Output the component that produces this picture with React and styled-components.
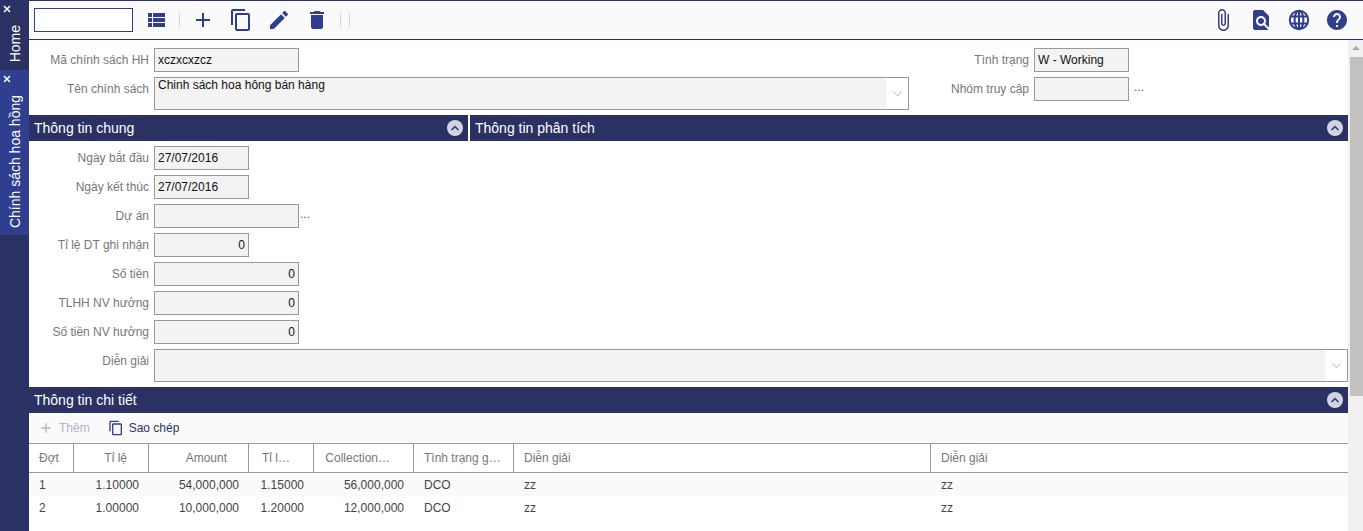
import React from 'react';
import styled, { createGlobalStyle } from 'styled-components';

const NAVY = '#2b3263';
const BLUE = '#2f3e8f';
const LINE = '#999';

const GlobalStyle = createGlobalStyle`
  html, body {
    margin: 0;
    padding: 0;
    height: 100%;
    overflow: hidden;
    background: #fff;
    font-family: "Liberation Sans", Arial, sans-serif;
    font-size: 12px;
  }
`;

const Page = styled.div`
  display: flex;
  height: 531px;
  overflow: hidden;
`;

const Sidebar = styled.nav`
  display: flex;
  flex-direction: column;
  flex: 0 0 29px;
  background: ${NAVY};
`;

const Tab = styled.div`
  display: flex;
  flex-direction: column;
  height: ${(p) => p.$h}px;
  padding-bottom: ${(p) => p.$pb}px;
  box-sizing: border-box;
  background: ${(p) => (p.$active ? BLUE : NAVY)};
  color: #fff;
`;

const TabClose = styled.svg`
  display: block;
  width: 8px;
  height: 8px;
  margin: 5px 0 0 3px;
`;

const TabLabel = styled.div`
  margin-top: auto;
  align-self: center;
  writing-mode: vertical-rl;
  transform: rotate(180deg);
  font-size: 14px;
  line-height: 16px;
  white-space: nowrap;
`;

const Main = styled.div`
  display: flex;
  flex-direction: column;
  flex: 1;
  min-width: 0;
`;

const Toolbar = styled.div`
  display: flex;
  align-items: center;
  flex: 0 0 40px;
  box-sizing: border-box;
  padding: 0 14px 0 5px;
  background: #fafafa;
  border-top: 1px solid ${NAVY};
  border-bottom: 1px solid ${NAVY};
`;

const SearchBox = styled.div`
  width: 99px;
  height: 24px;
  box-sizing: border-box;
  background: #fff;
  border: 1px solid ${BLUE};
`;

const ToolIcon = styled.svg`
  display: block;
  flex: 0 0 24px;
  width: 24px;
  height: 24px;
  margin-left: ${(p) => p.$ml ?? 14}px;
  fill: ${BLUE};
`;

const ToolSep = styled.span`
  flex: 0 0 1px;
  height: 14px;
  margin-left: ${(p) => p.$ml}px;
  background: #d4d4d4;
`;

const ToolRight = styled.div`
  display: flex;
  align-items: center;
  margin-left: auto;
`;

const Body = styled.div`
  display: flex;
  flex: 1;
  min-height: 0;
`;

const Content = styled.div`
  flex: 0 0 1319px;
  width: 1319px;
`;

const ScrollTrack = styled.div`
  flex: 0 0 15px;
  background: #f1f1f1;
`;

const ScrollArrow = styled.div`
  width: 0;
  height: 0;
  margin: 6px 0 0 4px;
  border-left: 4px solid transparent;
  border-right: 4px solid transparent;
  border-bottom: 4px solid #a8a8a8;
`;

const ScrollThumb = styled.div`
  height: 339px;
  margin: 7px 0 0 2px;
  background: #c1c1c1;
`;

const TopForm = styled.div`
  display: grid;
  grid-template-columns: 880px 1fr;
  row-gap: 5px;
  padding: 8px 0 5px;
`;

const Field = styled.div`
  display: flex;
  align-items: flex-start;
`;

const Label = styled.label`
  flex: 0 0 120px;
  margin-right: 5px;
  line-height: 24px;
  text-align: right;
  color: #777;
  white-space: nowrap;
`;

const Input = styled.div`
  width: ${(p) => p.$w}px;
  height: 24px;
  box-sizing: border-box;
  padding: 0 3px;
  line-height: 22px;
  text-align: ${(p) => (p.$right ? 'right' : 'left')};
  background: #f3f3f3;
  border: 1px solid ${LINE};
  color: #111;
`;

const TextArea = styled.div`
  display: flex;
  flex: ${(p) => (p.$w ? `0 0 ${p.$w}px` : 1)};
  height: 33px;
  box-sizing: border-box;
  border: 1px solid ${LINE};
  color: #111;
  background: #fff;
`;

const TextValue = styled.div`
  flex: 1;
  padding: 0 3px;
  line-height: 15px;
  background: #f3f3f3;
`;

const TextChevron = styled.div`
  display: flex;
  justify-content: center;
  flex: 0 0 22px;
  padding-top: 13px;
`;

const Dots = styled.span`
  margin-left: ${(p) => p.$ml}px;
  line-height: 21px;
  color: #555;
`;

const Sections = styled.div`
  display: grid;
  grid-template-columns: 439px 878px;
  column-gap: 2px;
`;

const SectionBar = styled.div`
  display: flex;
  align-items: center;
  justify-content: space-between;
  height: 26px;
  padding: 0 5px;
  background: ${NAVY};
  color: #fff;
  font-size: 14px;
`;

const Collapse = styled.span`
  display: flex;
  align-items: center;
  justify-content: center;
  width: 16px;
  height: 16px;
  border-radius: 50%;
  background: #d2d4e2;
`;

const FieldStack = styled.div`
  display: flex;
  flex-direction: column;
  gap: 5px;
  padding: 5px 0;
`;

const NoteRow = styled(Field)`
  padding-bottom: 5px;
`;

const SubToolbar = styled.div`
  display: flex;
  align-items: center;
  height: 30px;
  padding-left: 9px;
  background: #fafafa;
`;

const SubAction = styled.span`
  display: flex;
  align-items: center;
  gap: 5px;
  margin-right: ${(p) => p.$mr ?? 0}px;
  color: ${(p) => (p.$disabled ? '#b1b4d0' : NAVY)};
`;

const SubIcon = styled.svg`
  display: block;
  width: 16px;
  height: 16px;
  fill: ${(p) => (p.$disabled ? '#b1b4d0' : BLUE)};
`;

const Grid = styled.table`
  width: 1319px;
  table-layout: fixed;
  border-collapse: separate;
  border-spacing: 0;
  font-size: 12px;
`;

const Th = styled.th`
  width: ${(p) => p.$w}px;
  height: 30px;
  box-sizing: border-box;
  padding: 0 ${(p) => p.$pr}px 0 ${(p) => p.$pl}px;
  border-top: 1px solid ${LINE};
  border-bottom: 1px solid ${LINE};
  border-right: ${(p) => (p.$last ? 'none' : `1px solid ${LINE}`)};
  font-weight: normal;
  color: #777;
  text-align: ${(p) => (p.$right ? 'right' : 'left')};
  white-space: nowrap;
`;

const Tr = styled.tr`
  background: ${(p) => (p.$odd ? '#fafafa' : '#fff')};
`;

const Td = styled.td`
  height: 23px;
  padding: 0 10px;
  color: #444;
  text-align: ${(p) => (p.$right ? 'right' : 'left')};
`;

const ICONS = {
  list: 'M4 14h4v-4H4v4zm0 5h4v-4H4v4zM4 9h4V5H4v4zm5 5h12v-4H9v4zm0 5h12v-4H9v4zM9 5v4h12V5H9z',
  add: 'M19 13h-6v6h-2v-6H5v-2h6V5h2v6h6v2z',
  copy: 'M16 1H4c-1.1 0-2 .9-2 2v14h2V3h12V1zm3 4H8c-1.1 0-2 .9-2 2v14c0 1.1.9 2 2 2h11c1.1 0 2-.9 2-2V7c0-1.1-.9-2-2-2zm0 16H8V7h11v14z',
  edit: 'M3 17.25V21h3.75L17.81 9.94l-3.75-3.75L3 17.25zM20.71 7.04c.39-.39.39-1.02 0-1.41l-2.34-2.34c-.39-.39-1.02-.39-1.41 0l-1.83 1.83 3.75 3.75 1.83-1.83z',
  trash: 'M6 19c0 1.1.9 2 2 2h8c1.1 0 2-.9 2-2V7H6v12zM19 4h-3.5l-1-1h-5l-1 1H5v2h14V4z',
  clip: 'M16.5 6v11.5c0 2.21-1.79 4-4 4s-4-1.79-4-4V5c0-1.38 1.12-2.5 2.5-2.5s2.5 1.12 2.5 2.5v10.5c0 .55-.45 1-1 1s-1-.45-1-1V6H10v9.5c0 1.38 1.12 2.5 2.5 2.5s2.5-1.12 2.5-2.5V5c0-2.21-1.79-4-4-4S7 2.79 7 5v12.5c0 3.04 2.46 5.5 5.5 5.5s5.5-2.46 5.5-5.5V6h-1.5z',
  find: 'M20 19.59V8l-6-6H6c-1.1 0-1.99.9-1.99 2L4 20c0 1.1.89 2 1.99 2H18c.45 0 .85-.15 1.19-.4l-4.43-4.43c-.8.52-1.74.83-2.76.83-2.76 0-5-2.24-5-5s2.24-5 5-5 5 2.24 5 5c0 1.02-.31 1.96-.83 2.75L20 19.59zM9 13c0 1.66 1.34 3 3 3s3-1.34 3-3-1.34-3-3-3-3 1.34-3 3z',
  help: 'M12 2C6.48 2 2 6.48 2 12s4.48 10 10 10 10-4.48 10-10S17.52 2 12 2zm1 17h-2v-2h2v2zm2.07-7.75l-.9.92C13.45 12.9 13 13.5 13 15h-2v-.5c0-1.1.45-2.1 1.17-2.83l1.24-1.26c.37-.36.59-.86.59-1.41 0-1.1-.9-2-2-2s-2 .9-2 2H8c0-2.21 1.79-4 4-4s4 1.79 4 4c0 .88-.36 1.68-.93 2.25z',
};

const Tool = ({ name, ml }) => (
  <ToolIcon viewBox="0 0 24 24" $ml={ml}>
    <path d={ICONS[name]} />
  </ToolIcon>
);

const Globe = () => (
  <ToolIcon viewBox="0 0 24 24">
    <g fill="none" stroke={BLUE} strokeWidth="2">
      <circle cx="12" cy="12" r="9.2" />
      <ellipse cx="12" cy="12" rx="4.4" ry="9.2" />
      <path d="M12 2.8v18.4M3 8.6h18M3 15.4h18" />
    </g>
  </ToolIcon>
);

const CollapseButton = () => (
  <Collapse>
    <svg width="10" height="6" viewBox="0 0 10 6">
      <path d="M1.5 5L5 1.6 8.5 5" fill="none" stroke={BLUE} strokeWidth="1.6" />
    </svg>
  </Collapse>
);

const Chevron = () => (
  <svg width="9" height="6" viewBox="0 0 9 6">
    <path d="M.5.5l4 4.4 4-4.4" fill="none" stroke="#b5b5b5" strokeWidth="1" />
  </svg>
);

const SideTab = ({ label, height, pb, active }) => (
  <Tab $h={height} $pb={pb} $active={active}>
    <TabClose viewBox="0 0 8 8">
      <path d="M1 1l6 6M7 1L1 7" stroke="#fff" strokeWidth="1.5" />
    </TabClose>
    <TabLabel>{label}</TabLabel>
  </Tab>
);

const generalFields = [
  { label: 'Ngày bắt đầu', width: 95, value: '27/07/2016' },
  { label: 'Ngày kết thúc', width: 95, value: '27/07/2016' },
  { label: 'Dự án', width: 145, value: '', dots: true },
  { label: 'Tỉ lệ DT ghi nhận', width: 95, value: '0', right: true },
  { label: 'Số tiền', width: 145, value: '0', right: true },
  { label: 'TLHH NV hưởng', width: 145, value: '0', right: true },
  { label: 'Số tiền NV hưởng', width: 145, value: '0', right: true },
];

const columns = [
  { title: 'Đợt', width: 45, key: 'dot', pl: 10, pr: 0 },
  { title: 'Tỉ lệ', width: 75, key: 'rate', right: true, pl: 0, pr: 21 },
  { title: 'Amount', width: 100, key: 'amount', right: true, pl: 0, pr: 21 },
  { title: 'Tỉ l…', width: 65, key: 'rate2', right: true, pl: 0, pr: 23 },
  { title: 'Collection…', width: 100, key: 'collection', right: true, pl: 0, pr: 23 },
  { title: 'Tình trạng g…', width: 100, key: 'status', pl: 10, pr: 0 },
  { title: 'Diễn giải', width: 417, key: 'note1', pl: 10, pr: 0 },
  { title: 'Diễn giải', width: 417, key: 'note2', pl: 10, pr: 0 },
];

const rows = [
  { dot: '1', rate: '1.10000', amount: '54,000,000', rate2: '1.15000', collection: '56,000,000', status: 'DCO', note1: 'zz', note2: 'zz' },
  { dot: '2', rate: '1.00000', amount: '10,000,000', rate2: '1.20000', collection: '12,000,000', status: 'DCO', note1: 'zz', note2: 'zz' },
];

const App = () => (
  <Page>
    <GlobalStyle />
    <Sidebar>
      <SideTab label="Home" height={70} pb={8} />
      <SideTab label="Chính sách hoa hồng" height={165} pb={7} active />
    </Sidebar>
    <Main>
      <Toolbar>
        <SearchBox />
        <Tool name="list" ml={11} />
        <ToolSep $ml={11} />
        <Tool name="add" ml={11} />
        <Tool name="copy" />
        <Tool name="edit" />
        <Tool name="trash" />
        <ToolSep $ml={11} />
        <ToolSep $ml={8} />
        <ToolRight>
          <Tool name="clip" ml={0} />
          <Tool name="find" />
          <Globe />
          <Tool name="help" />
        </ToolRight>
      </Toolbar>
      <Body>
        <Content>
          <TopForm>
            <Field>
              <Label>Mã chính sách HH</Label>
              <Input $w={145}>xczxcxzcz</Input>
            </Field>
            <Field>
              <Label>Tình trạng</Label>
              <Input $w={95}>W - Working</Input>
            </Field>
            <Field>
              <Label>Tên chính sách</Label>
              <TextArea $w={755}>
                <TextValue>Chinh sách hoa hông bán hàng</TextValue>
                <TextChevron><Chevron /></TextChevron>
              </TextArea>
            </Field>
            <Field>
              <Label>Nhóm truy cập</Label>
              <Input $w={95} />
              <Dots $ml={5}>...</Dots>
            </Field>
          </TopForm>
          <Sections>
            <div>
              <SectionBar>Thông tin chung<CollapseButton /></SectionBar>
              <FieldStack>
                {generalFields.map((f) => (
                  <Field key={f.label}>
                    <Label>{f.label}</Label>
                    <Input $w={f.width} $right={f.right}>{f.value}</Input>
                    {f.dots && <Dots $ml={1}>...</Dots>}
                  </Field>
                ))}
              </FieldStack>
            </div>
            <SectionBar>Thông tin phân tích<CollapseButton /></SectionBar>
          </Sections>
          <NoteRow>
            <Label>Diễn giải</Label>
            <TextArea>
              <TextValue />
              <TextChevron><Chevron /></TextChevron>
            </TextArea>
          </NoteRow>
          <SectionBar>Thông tin chi tiết<CollapseButton /></SectionBar>
          <SubToolbar>
            <SubAction $disabled $mr={18}>
              <SubIcon viewBox="0 0 24 24" $disabled><path d={ICONS.add} /></SubIcon>
              Thêm
            </SubAction>
            <SubAction>
              <SubIcon viewBox="0 0 24 24"><path d={ICONS.copy} /></SubIcon>
              Sao chép
            </SubAction>
          </SubToolbar>
          <Grid>
            <thead>
              <tr>
                {columns.map((c, i) => (
                  <Th key={c.key} $w={c.width} $pl={c.pl} $pr={c.pr} $right={c.right} $last={i === columns.length - 1}>
                    {c.title}
                  </Th>
                ))}
              </tr>
            </thead>
            <tbody>
              {rows.map((r, i) => (
                <Tr key={r.dot} $odd={i % 2 === 0}>
                  {columns.map((c) => (
                    <Td key={c.key} $right={c.right}>{r[c.key]}</Td>
                  ))}
                </Tr>
              ))}
            </tbody>
          </Grid>
        </Content>
        <ScrollTrack>
          <ScrollArrow />
          <ScrollThumb />
        </ScrollTrack>
      </Body>
    </Main>
  </Page>
);

export default App;
